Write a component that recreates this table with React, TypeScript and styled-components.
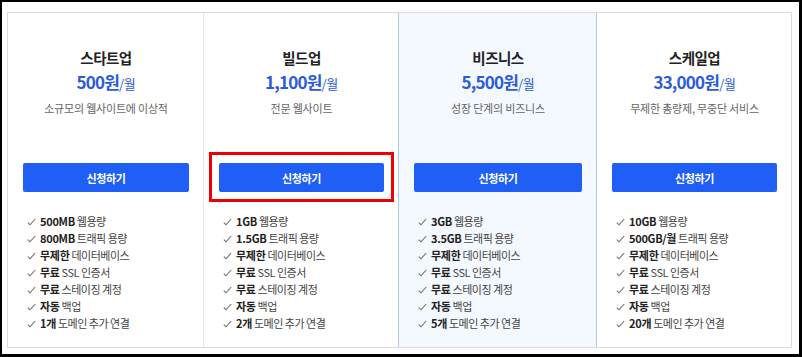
import styled, { createGlobalStyle } from "styled-components"

const GlobalStyle = createGlobalStyle`
    html, body {
        margin: 0;
        padding: 0;
        background: #ffffff;
    }
    body {
        font-family: "Noto Sans CJK KR", "Noto Sans", sans-serif;
    }
`

const Frame = styled.div`
    box-sizing: border-box;
    width: 802px;
    height: 357px;
    border-style: solid;
    border-color: #000;
    border-width: 2px 3px 3px 2px;
    background: #fff;
    padding: 10px 0 0 5px;
`

const PlanGrid = styled.div`
    box-sizing: border-box;
    width: 785px;
    height: 336px;
    border: 1px solid #dcdcdc;
    display: grid;
    grid-template-columns: 196px 195px 198px 194px;
`

const PlanColumn = styled.div<{ $featured?: boolean }>`
    box-sizing: border-box;
    display: flex;
    flex-direction: column;
    align-items: stretch;
    padding: 34px 14px 0 15px;
    border-right: 1px solid ${p => (p.$featured ? "#b6c8ea" : "#e6e6e6")};
    border-left: ${p => (p.$featured ? "1px solid #b6c8ea" : "none")};
    margin-left: ${p => (p.$featured ? "-1px" : "0")};
    background: ${p => (p.$featured ? "#f4f8ff" : "transparent")};

    &:last-child {
        border-right: none;
    }
`

const PlanName = styled.div`
    text-align: center;
    font-size: 14.5px;
    font-weight: 700;
    line-height: 22px;
    letter-spacing: -0.5px;
    color: #222;
`

const Price = styled.div`
    text-align: center;
    margin-top: 0;
    font-size: 17px;
    font-weight: 700;
    line-height: 26px;
    color: #2b5bd8;
    letter-spacing: -0.8px;

    span {
        font-size: 13px;
        font-weight: 400;
        letter-spacing: -0.3px;
    }
`

const Summary = styled.div`
    text-align: center;
    margin-top: 3px;
    font-size: 11px;
    line-height: 16px;
    letter-spacing: -0.2px;
    color: #666;
`

const ButtonArea = styled.div`
    position: relative;
    margin-top: 47px;
`

const ApplyButton = styled.button`
    display: block;
    width: 100%;
    height: 29px;
    border: none;
    border-radius: 2px;
    background: #1f5ff6;
    color: #fff;
    font-family: inherit;
    font-size: 11px;
    font-weight: 700;
    letter-spacing: -0.4px;
    cursor: pointer;
`

const Highlight = styled.div`
    position: absolute;
    left: -10px;
    right: -10px;
    top: -11px;
    bottom: -10px;
    border: 3px solid #ee0000;
    pointer-events: none;
`

const FeatureList = styled.ul`
    list-style: none;
    margin: 21px 0 0;
    padding: 0 0 0 4px;
`

const Feature = styled.li`
    display: flex;
    align-items: center;
    gap: 4px;
    font-size: 11px;
    line-height: 17px;
    letter-spacing: -0.5px;
    color: #444;
    white-space: nowrap;

    b {
        font-weight: 700;
        color: #222;
        letter-spacing: -0.3px;
    }
`

const CheckIcon = styled.svg`
    flex: none;
    width: 9px;
    height: 8px;
    margin-top: 1px;
`

const Check = () => (
    <CheckIcon viewBox="0 0 9 8">
        <polyline points="0.8,4.6 3,6.8 8.2,1" fill="none" stroke="#6f6f6f" strokeWidth="1.1" />
    </CheckIcon>
)

type Plan = {
    name: string
    price: string
    summary: string
    disk: string
    traffic: string
    domains: string
    featured?: boolean
    highlighted?: boolean
}

const plans: Plan[] = [
    { name: "스타트업", price: "500원", summary: "소규모의 웹사이트에 이상적", disk: "500MB", traffic: "800MB", domains: "1개" },
    { name: "빌드업", price: "1,100원", summary: "전문 웹사이트", disk: "1GB", traffic: "1.5GB", domains: "2개", highlighted: true },
    { name: "비즈니스", price: "5,500원", summary: "성장 단계의 비즈니스", disk: "3GB", traffic: "3.5GB", domains: "5개", featured: true },
    { name: "스케일업", price: "33,000원", summary: "무제한 총량제, 무중단 서비스", disk: "10GB", traffic: "500GB/월", domains: "20개" },
]

const App = () => {
    return (
        <>
            <GlobalStyle />
            <Frame>
                <PlanGrid>
                    {plans.map(plan => (
                        <PlanColumn key={plan.name} $featured={plan.featured}>
                            <PlanName>{plan.name}</PlanName>
                            <Price>
                                {plan.price}
                                <span>/월</span>
                            </Price>
                            <Summary>{plan.summary}</Summary>
                            <ButtonArea>
                                <ApplyButton>신청하기</ApplyButton>
                                {plan.highlighted && <Highlight />}
                            </ButtonArea>
                            <FeatureList>
                                <Feature><Check /><span><b>{plan.disk}</b> 웹용량</span></Feature>
                                <Feature><Check /><span><b>{plan.traffic}</b> 트래픽 용량</span></Feature>
                                <Feature><Check /><span><b>무제한</b> 데이터베이스</span></Feature>
                                <Feature><Check /><span><b>무료</b> SSL 인증서</span></Feature>
                                <Feature><Check /><span><b>무료</b> 스테이징 계정</span></Feature>
                                <Feature><Check /><span><b>자동</b> 백업</span></Feature>
                                <Feature><Check /><span><b>{plan.domains}</b> 도메인 추가 연결</span></Feature>
                            </FeatureList>
                        </PlanColumn>
                    ))}
                </PlanGrid>
            </Frame>
        </>
    )
}

export default App
